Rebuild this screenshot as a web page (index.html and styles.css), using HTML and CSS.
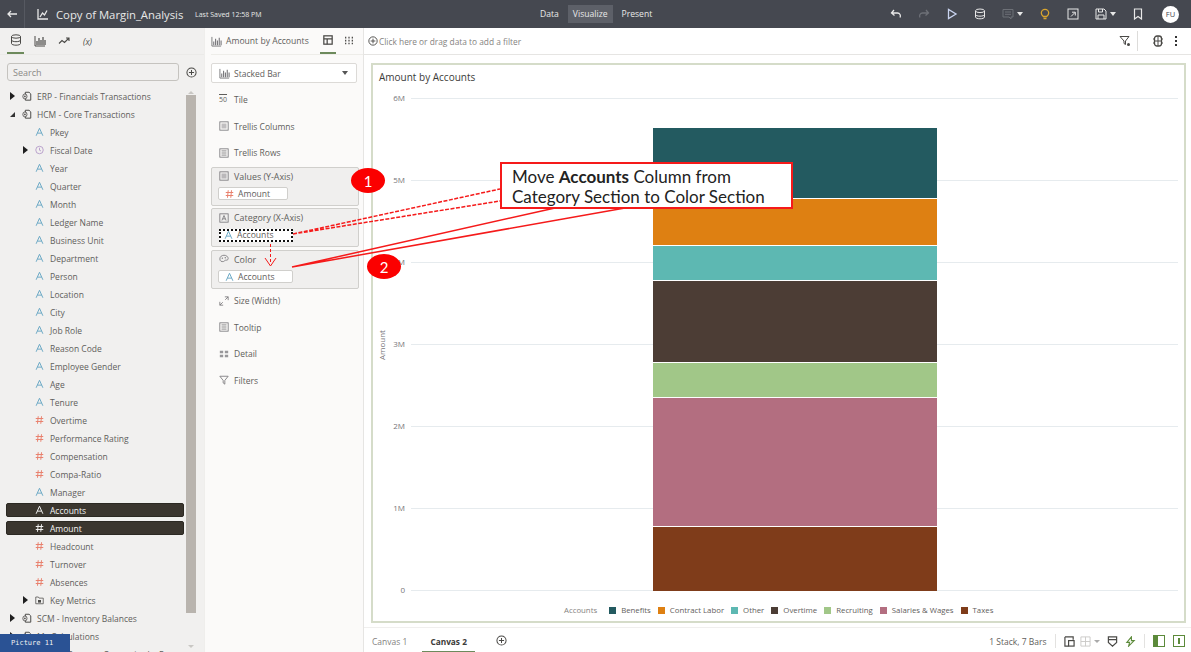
FILE: index.html
```html
<!DOCTYPE html>
<html lang="en">
<head>
    <meta charset="UTF-8">
    <title>Copy of Margin_Analysis</title>
    <link rel="stylesheet" href="styles.css">
</head>
<body>
    <svg class="defs" width="0" height="0">
        <symbol id="i-attr" viewBox="0 0 12 12"><path d="M1.500 11 6 1l4.500 10M3.200 7.500h5.600" fill="none" stroke="currentColor" stroke-width="1.300"/></symbol>
        <symbol id="i-num" viewBox="0 0 12 12"><path d="M4.300 1 3.300 11M8.700 1l-1 10M1 4h10M1 8h10" fill="none" stroke="currentColor" stroke-width="1.300"/></symbol>
        <symbol id="i-clock" viewBox="0 0 12 12"><circle cx="6" cy="6" r="5" fill="none" stroke="currentColor"/><path d="M6 3v3.300l2 1" fill="none" stroke="currentColor"/></symbol>
        <symbol id="i-source" viewBox="0 0 12 12"><path d="M4 1.500h4.500l2 2V11H4z" fill="none" stroke="currentColor" stroke-width="1.200"/><ellipse cx="3.500" cy="6.500" rx="2.500" ry="3" fill="#f1f0ef" stroke="currentColor"/><circle cx="3.500" cy="6.500" r="1" fill="currentColor"/></symbol>
        <symbol id="i-folder" viewBox="0 0 12 12"><path d="M1 2h3.500l1 1.500H11V11H1z" fill="none" stroke="currentColor"/><rect x="4" y="6" width="4" height="3.500" fill="currentColor"/></symbol>
        <symbol id="i-bars" viewBox="0 0 12 12"><path d="M1 1v10h10" fill="none" stroke="currentColor"/><path d="M3 10V6M5 10V3M7 10V5M9 10V2M11 10V5" stroke="currentColor" stroke-width="1.200"/></symbol>
        <symbol id="i-plus" viewBox="0 0 12 12"><circle cx="6" cy="6" r="5" fill="none" stroke="currentColor" stroke-width="1.100"/><path d="M6 3.200v5.600M3.200 6h5.600" stroke="currentColor" stroke-width="1.100"/></symbol>
        <symbol id="i-box" viewBox="0 0 12 12"><rect x="1" y="1" width="10" height="10" fill="none" stroke="currentColor"/><rect x="3" y="3" width="6" height="6" fill="currentColor" opacity=".45"/></symbol>
        <symbol id="i-lines" viewBox="0 0 12 12"><rect x="1" y="1" width="10" height="10" fill="none" stroke="currentColor"/><path d="M3 3.500h6M3 6h6M3 8.500h6" stroke="currentColor"/></symbol>
    </svg>

    <header class="topbar">
        <div class="back-cell"><svg class="ico" width="12" height="12" viewBox="0 0 12 12"><path d="M11 6H2M5 3 2 6l3 3" fill="none" stroke="currentColor" stroke-width="1.300"/></svg></div>
        <svg class="app-icon" width="12" height="12" viewBox="0 0 12 12"><path d="M1 1v10h10" fill="none" stroke="currentColor" stroke-width="1.300"/><path d="M3 9l2.500-4L7.500 7 10 2.500" fill="none" stroke="currentColor" stroke-width="1.300"/></svg>
        <span class="doc-title">Copy of Margin_Analysis</span>
        <span class="saved">Last Saved 12:58 PM</span>
        <nav class="modes">
            <span class="mode">Data</span>
            <span class="mode mode-on">Visualize</span>
            <span class="mode">Present</span>
        </nav>
        <div class="top-tools">
            <svg class="ico" width="12" height="12" viewBox="0 0 12 12"><path d="M4 2 1.500 5 4.500 7.500M2 5h5.500a3 3 0 0 1 2.500 4.500" fill="none" stroke="currentColor" stroke-width="1.300"/></svg>
            <svg class="ico dim" width="12" height="12" viewBox="0 0 12 12"><path d="M8 2l2.500 3-3 2.500M10 5H4.500A3 3 0 0 0 2 9.500" fill="none" stroke="currentColor" stroke-width="1.300"/></svg>
            <svg class="ico" width="12" height="12" viewBox="0 0 12 12"><path d="M2.500 1.500v9L10 6z" fill="none" stroke="#c9d4f0" stroke-width="1.300"/></svg>
            <svg class="ico" width="12" height="12" viewBox="0 0 12 12"><ellipse cx="6" cy="2.800" rx="4.500" ry="1.800" fill="none" stroke="currentColor"/><path d="M1.500 3v6c0 1 2 1.800 4.500 1.800S10.500 10 10.500 9V3M1.500 6.500c0 1 2 1.700 4.500 1.700s4.500-.7 4.500-1.700" fill="none" stroke="currentColor"/></svg>
            <span class="tool-drop dim"><svg class="ico" width="12" height="12" viewBox="0 0 12 12"><path d="M1 1.500h10v7.500H9v2L7 9H1zM3 4h6M3 6.300h6" fill="none" stroke="currentColor"/></svg><i class="caret"></i></span>
            <svg class="ico bulb" width="12" height="12" viewBox="0 0 12 12"><path d="M4.300 8.500C3 7.500 2.300 6.500 2.300 5a3.700 3.700 0 0 1 7.400 0c0 1.500-.7 2.500-2 3.500zM4.500 10.500h3" fill="none" stroke="currentColor" stroke-width="1.300"/></svg>
            <svg class="ico" width="12" height="12" viewBox="0 0 12 12"><rect x="1" y="1" width="10" height="10" fill="none" stroke="currentColor"/><path d="M4 8.500 8 4.500M5 4.200h3.300v3.300" fill="none" stroke="currentColor"/></svg>
            <span class="tool-drop"><svg class="ico" width="12" height="12" viewBox="0 0 12 12"><path d="M1 1h8l2 2v8H1zM3.500 1v3h4V1M3 11V7h6v4" fill="none" stroke="currentColor"/></svg><i class="caret"></i></span>
            <svg class="ico" width="12" height="12" viewBox="0 0 12 12"><path d="M2.500 1h7v10L6 8.500 2.500 11z" fill="none" stroke="currentColor" stroke-width="1.200"/></svg>
            <span class="avatar">FU</span>
        </div>
    </header>

    <div class="workspace">
        <aside class="data-panel">
            <div class="panel-tabs">
                <span class="panel-tab tab-on"><svg width="12" height="12" viewBox="0 0 12 12"><ellipse cx="6" cy="2.500" rx="4.500" ry="1.700" fill="none" stroke="currentColor"/><path d="M1.500 2.500v7c0 1 2 1.700 4.500 1.700s4.500-.7 4.500-1.700v-7M1.500 6c0 1 2 1.700 4.500 1.700S10.500 7 10.500 6" fill="none" stroke="currentColor"/></svg></span>
                <span class="panel-tab"><svg width="12" height="12"><use href="#i-bars"/></svg></span>
                <span class="panel-tab"><svg width="12" height="12" viewBox="0 0 12 12"><path d="M1 8.500 4 5.500 6.500 7.500 11 3M8 3h3v3" fill="none" stroke="currentColor" stroke-width="1.100"/></svg></span>
                <span class="panel-tab fx">(x)</span>
            </div>
            <div class="search-row">
                <div class="search">Search</div>
                <svg class="add-data" width="11" height="11"><use href="#i-plus"/></svg>
            </div>
            <div class="tree-wrap">
                <ul class="tree">
                    <li class="row lvl1"><i class="tri"></i><svg class="rico src"><use href="#i-source"/></svg>ERP - Financials Transactions</li>
                    <li class="row lvl1"><i class="tri tri-open"></i><svg class="rico src"><use href="#i-source"/></svg>HCM - Core Transactions</li>
                    <li class="row lvl2"><svg class="rico attr"><use href="#i-attr"/></svg>Pkey</li>
                    <li class="row lvl2 has-tri"><i class="tri"></i><svg class="rico date"><use href="#i-clock"/></svg>Fiscal Date</li>
                    <li class="row lvl2"><svg class="rico attr"><use href="#i-attr"/></svg>Year</li>
                    <li class="row lvl2"><svg class="rico attr"><use href="#i-attr"/></svg>Quarter</li>
                    <li class="row lvl2"><svg class="rico attr"><use href="#i-attr"/></svg>Month</li>
                    <li class="row lvl2"><svg class="rico attr"><use href="#i-attr"/></svg>Ledger Name</li>
                    <li class="row lvl2"><svg class="rico attr"><use href="#i-attr"/></svg>Business Unit</li>
                    <li class="row lvl2"><svg class="rico attr"><use href="#i-attr"/></svg>Department</li>
                    <li class="row lvl2"><svg class="rico attr"><use href="#i-attr"/></svg>Person</li>
                    <li class="row lvl2"><svg class="rico attr"><use href="#i-attr"/></svg>Location</li>
                    <li class="row lvl2"><svg class="rico attr"><use href="#i-attr"/></svg>City</li>
                    <li class="row lvl2"><svg class="rico attr"><use href="#i-attr"/></svg>Job Role</li>
                    <li class="row lvl2"><svg class="rico attr"><use href="#i-attr"/></svg>Reason Code</li>
                    <li class="row lvl2"><svg class="rico attr"><use href="#i-attr"/></svg>Employee Gender</li>
                    <li class="row lvl2"><svg class="rico attr"><use href="#i-attr"/></svg>Age</li>
                    <li class="row lvl2"><svg class="rico attr"><use href="#i-attr"/></svg>Tenure</li>
                    <li class="row lvl2"><svg class="rico num"><use href="#i-num"/></svg>Overtime</li>
                    <li class="row lvl2"><svg class="rico num"><use href="#i-num"/></svg>Performance Rating</li>
                    <li class="row lvl2"><svg class="rico num"><use href="#i-num"/></svg>Compensation</li>
                    <li class="row lvl2"><svg class="rico num"><use href="#i-num"/></svg>Compa-Ratio</li>
                    <li class="row lvl2"><svg class="rico attr"><use href="#i-attr"/></svg>Manager</li>
                    <li class="row lvl2 picked"><svg class="rico"><use href="#i-attr"/></svg>Accounts</li>
                    <li class="row lvl2 picked"><svg class="rico"><use href="#i-num"/></svg>Amount</li>
                    <li class="row lvl2"><svg class="rico num"><use href="#i-num"/></svg>Headcount</li>
                    <li class="row lvl2"><svg class="rico num"><use href="#i-num"/></svg>Turnover</li>
                    <li class="row lvl2"><svg class="rico num"><use href="#i-num"/></svg>Absences</li>
                    <li class="row lvl2 has-tri"><i class="tri"></i><svg class="rico src"><use href="#i-folder"/></svg>Key Metrics</li>
                    <li class="row lvl1"><i class="tri"></i><svg class="rico src"><use href="#i-source"/></svg>SCM - Inventory Balances</li>
                    <li class="row lvl1"><i class="tri"></i><svg class="rico src"><use href="#i-source"/></svg>My Calculations</li>
                    <li class="row lvl1"><i class="tri"></i><svg class="rico src"><use href="#i-source"/></svg>FY2020 Expense Categories by Expense</li>
                </ul>
                <div class="scrollbar">
                    <i class="arrow arrow-up"></i>
                    <i class="thumb"></i>
                    <i class="arrow arrow-down"></i>
                </div>
            </div>
        </aside>

        <section class="grammar-panel">
            <div class="grammar-head">
                <svg class="head-ico" width="11" height="11"><use href="#i-bars"/></svg>
                <span class="viz-name">Amount by Accounts</span>
                <span class="grammar-tab tab-on"><svg width="10" height="10" viewBox="0 0 12 12"><rect x="1" y="1" width="10" height="10" fill="none" stroke="currentColor" stroke-width="1.500"/><path d="M1 4.500h10M5 4.500V11" stroke="currentColor" stroke-width="1.500"/></svg></span>
                <span class="grammar-tab"><svg width="10" height="10" viewBox="0 0 12 12"><path d="M2 1v10M6 1v10M10 1v10" stroke="currentColor" stroke-dasharray="2 1.500" stroke-width="1.500"/></svg></span>
            </div>
            <div class="viz-select">
                <svg class="head-ico" width="11" height="11"><use href="#i-bars"/></svg>
                <span>Stacked Bar</span>
                <i class="select-caret"></i>
            </div>
            <div class="slot slot-first"><span class="so">50</span>Tile</div>
            <div class="slot"><svg class="slot-ico"><use href="#i-box"/></svg>Trellis Columns</div>
            <div class="slot"><svg class="slot-ico"><use href="#i-lines"/></svg>Trellis Rows</div>
            <div class="well first-well">
                <div class="well-label"><svg class="slot-ico"><use href="#i-box"/></svg>Values (Y-Axis)</div>
                <div class="pill pill-short"><svg class="rico num"><use href="#i-num"/></svg>Amount</div>
            </div>
            <div class="well">
                <div class="well-label"><svg class="slot-ico" viewBox="0 0 12 12"><rect x="1" y="1" width="10" height="10" fill="none" stroke="currentColor"/><path d="M3.500 9 6 3l2.500 6M4.500 7h3" fill="none" stroke="currentColor"/></svg>Category (X-Axis)</div>
                <div class="pill pill-dotted"><svg class="rico attr"><use href="#i-attr"/></svg>Accounts</div>
            </div>
            <div class="well">
                <div class="well-label"><svg class="slot-ico" viewBox="0 0 12 12"><path d="M1 6c0-3 2.500-4.500 5-4.500s5 1.500 5 4c0 2-2 2-3.500 2-1 0-1 1.500-2 1.500C3 9.500 1 8.500 1 6z" fill="none" stroke="currentColor"/><circle cx="4" cy="5" r=".8" fill="currentColor"/><circle cx="7.500" cy="4.500" r=".8" fill="currentColor"/></svg>Color</div>
                <div class="pill"><svg class="rico attr"><use href="#i-attr"/></svg>Accounts</div>
            </div>
            <div class="slot slot-after"><svg class="slot-ico" viewBox="0 0 12 12"><path d="M1 7v4h4M7 1h4v4M1 11l3.500-3.500M11 1 7.500 4.500" fill="none" stroke="currentColor"/></svg>Size (Width)</div>
            <div class="slot"><svg class="slot-ico"><use href="#i-lines"/></svg>Tooltip</div>
            <div class="slot"><svg class="slot-ico" viewBox="0 0 12 12"><path d="M1 2h4v3H1zM7 2h4v3H7zM1 7h4v3H1zM7 7h4v3H7z" fill="currentColor" opacity=".75"/></svg>Detail</div>
            <div class="slot"><svg class="slot-ico" viewBox="0 0 12 12"><path d="M1 1.500h10L7 6.500V11L5 9.500v-3z" fill="none" stroke="currentColor"/></svg>Filters</div>
        </section>

        <main class="canvas-area">
            <div class="filter-bar">
                <svg class="filter-plus" width="10" height="10"><use href="#i-plus"/></svg>
                <span class="filter-hint">Click here or drag data to add a filter</span>
                <svg class="filter-ico filter-funnel" width="12" height="12" viewBox="0 0 12 12"><path d="M1 1.500h9L6.500 6v3.500L5 8.500V6z" fill="none" stroke="currentColor"/><circle cx="9.500" cy="9.500" r="1.500" fill="currentColor"/></svg>
                <span class="filter-sep"></span>
                <svg class="filter-ico" width="12" height="12" viewBox="0 0 12 12"><rect x="2.500" y="1" width="7" height="10" rx="2.500" fill="none" stroke="currentColor" stroke-width="1.300"/><path d="M6 1v10M2.500 6h7M1 4h1.500M1 8h1.500M9.500 4H11M9.500 8H11" stroke="currentColor"/></svg>
                <span class="kebab"><i></i><i></i><i></i></span>
            </div>
            <div class="viz-wrap">
                <div class="viz-frame">
                    <div class="viz-title">Amount by Accounts</div>
                    <svg class="plot" width="811" height="512" viewBox="0 0 811 512">
                        <g class="grid">
                            <path d="M39 8.500H806M39 90.500H806M39 172.500H806M39 254.500H806M39 336.500H806M39 418.500H806M39 500.500H806"/>
                        </g>
                        <g class="ticks" text-anchor="end">
                            <text x="33" y="11">6M</text>
                            <text x="33" y="93">5M</text>
                            <text x="33" y="175">4M</text>
                            <text x="33" y="257">3M</text>
                            <text x="33" y="339">2M</text>
                            <text x="33" y="421">1M</text>
                            <text x="33" y="503">0</text>
                        </g>
                        <text class="ticks" transform="translate(13 255) rotate(-90)" text-anchor="middle">Amount</text>
                        <rect x="281" y="38" width="284" height="70" fill="#235a60"/>
                        <rect x="281" y="109" width="284" height="46" fill="#de8012"/>
                        <rect x="281" y="156" width="284" height="34" fill="#5db8b2"/>
                        <rect x="281" y="191" width="284" height="81" fill="#4c3d35"/>
                        <rect x="281" y="273" width="284" height="34" fill="#a1c788"/>
                        <rect x="281" y="308" width="284" height="128" fill="#b36e80"/>
                        <rect x="281" y="437" width="284" height="64" fill="#7f3c1a"/>
                    </svg>
                    <div class="legend">
                        <span class="legend-name">Accounts</span>
                        <span class="key"><i class="sw sw-1"></i>Benefits</span>
                        <span class="key"><i class="sw sw-2"></i>Contract Labor</span>
                        <span class="key"><i class="sw sw-3"></i>Other</span>
                        <span class="key"><i class="sw sw-4"></i>Overtime</span>
                        <span class="key"><i class="sw sw-5"></i>Recruiting</span>
                        <span class="key"><i class="sw sw-6"></i>Salaries &amp; Wages</span>
                        <span class="key"><i class="sw sw-7"></i>Taxes</span>
                    </div>
                </div>
            </div>
            <footer class="canvas-tabs">
                <span class="canvas-tab">Canvas 1</span>
                <span class="canvas-tab canvas-on">Canvas 2</span>
                <svg class="canvas-add" width="11" height="11"><use href="#i-plus"/></svg>
                <span class="stack-info">1 Stack, 7 Bars</span>
                <span class="foot-sep"></span>
                <svg class="foot-ico foot-first" width="11" height="11" viewBox="0 0 12 12"><path d="M1 1h9v3M1 1v10h4" fill="none" stroke="currentColor" stroke-width="1.300"/><rect x="5" y="5" width="6" height="6" fill="none" stroke="currentColor" stroke-width="1.300"/></svg>
                <svg class="foot-ico faint" width="11" height="11" viewBox="0 0 12 12"><path d="M1 1h10v10H1zM6 1v10M1 6h10" fill="none" stroke="currentColor"/></svg>
                <i class="foot-caret"></i>
                <svg class="foot-ico" width="11" height="11" viewBox="0 0 12 12"><path d="M1.500 1h9v6L6 11 1.500 7zM1.500 4h9" fill="none" stroke="currentColor" stroke-width="1.300"/></svg>
                <svg class="foot-ico green foot-zap" width="11" height="11" viewBox="0 0 12 12"><path d="M7 1 2 7h3l-1 4 6-6H7z" fill="none" stroke="currentColor" stroke-width="1.200"/></svg>
                <span class="foot-sep"></span>
                <svg class="foot-ico green foot-left" width="12" height="12" viewBox="0 0 12 12"><rect x=".5" y=".5" width="11" height="11" fill="none" stroke="currentColor"/><rect x="1" y="1" width="4" height="10" fill="currentColor"/></svg>
                <svg class="foot-ico green" width="12" height="12" viewBox="0 0 12 12"><rect x=".5" y=".5" width="11" height="11" fill="none" stroke="currentColor"/><rect x="5" y="3" width="2" height="6" fill="currentColor"/></svg>
            </footer>
        </main>
    </div>

    <!-- annotation drawn on top of the screenshot -->
    <svg class="notes" width="1191" height="652" viewBox="0 0 1191 652">
        <g fill="none" stroke="#f51a1a">
            <path d="M293 234 500 189M293 234 500 201" stroke-width="1.500" stroke-dasharray="4 1.500"/>
            <path d="M292 267 555 208M292 267 625 208" stroke-width="1.500"/>
            <path d="M270.500 244V262" stroke-dasharray="3 2"/>
            <path d="M265 258 270.500 266 276 258"/>
        </g>
    </svg>
    <div class="callout">Move <b>Accounts</b> Column from<br>Category Section to Color Section</div>
    <span class="marker marker-1">1</span>
    <span class="marker marker-2">2</span>
    <div class="pic-tag">Picture 11</div>
</body>
</html>
```

FILE: styles.css
```css
* {
    box-sizing: border-box;
}
html, body {
    margin: 0;
    height: 100%;
}
body {
    position: relative;
    display: flex;
    flex-direction: column;
    width: 1191px;
    height: 652px;
    overflow: hidden;
    font-family: "Open Sans", "Noto Sans", sans-serif;
    font-size: 9px;
    color: #5f5e5c;
    background: #fff;
}
i {
    display: block;
}
.defs {
    position: absolute;
}

/* top bar */
.topbar {
    flex: none;
    display: flex;
    align-items: center;
    height: 28px;
    background: #454850;
    color: #e8e8e8;
}
.back-cell {
    display: flex;
    align-items: center;
    justify-content: center;
    width: 25px;
    height: 100%;
    border-right: 1px solid #565961;
}
.app-icon {
    margin-left: 12px;
}
.doc-title {
    margin-left: 7px;
    font-size: 11.300px;
    width: 139px;
    white-space: nowrap;
}
.saved {
    margin-left: 0;
    font-size: 7px;
    width: 87px;
    white-space: nowrap;
}
.modes {
    display: flex;
    align-items: center;
    margin-left: 253px;
}
.mode {
    padding: 3px 5px;
    font-size: 8.600px;
    margin-right: 4px;
}
.mode-on {
    background: #5d6068;
}
.top-tools {
    display: flex;
    align-items: center;
    gap: 16px;
    margin-left: auto;
    padding-right: 12px;
}
.ico {
    display: block;
    color: #e8e8e8;
}
.dim, .dim .ico {
    color: #6d7077;
}
.bulb {
    color: #d9a52e;
}
.tool-drop {
    display: flex;
    align-items: center;
    gap: 3px;
}
.caret {
    width: 0;
    height: 0;
    border: 3px solid transparent;
    border-top: 4px solid #e8e8e8;
    border-bottom: 0;
}
.avatar {
    display: flex;
    align-items: center;
    justify-content: center;
    width: 17px;
    height: 17px;
    border-radius: 50%;
    background: #fff;
    color: #454850;
    font-size: 7.500px;
    margin-left: 2px;
}

.workspace {
    flex: 1;
    display: flex;
    min-height: 0;
}

/* data panel */
.data-panel {
    width: 204px;
    background: #f1f0ef;
    display: flex;
    flex-direction: column;
    min-height: 0;
}
.panel-tabs {
    display: flex;
    height: 27px;
    padding-left: 7px;
    gap: 7px;
    border-bottom: 1px solid #ebeae8;
}
.panel-tab {
    width: 17px;
    display: flex;
    align-items: center;
    justify-content: center;
    color: #4a4946;
}
.tab-on {
    border-bottom: 2px solid #6d8a5c;
}
.fx {
    font-style: italic;
    font-size: 8.500px;
}
.search-row {
    display: flex;
    align-items: center;
    padding: 8px 0 0 7px;
}
.search {
    width: 172px;
    height: 18px;
    padding: 2px 5px;
    border: 1px solid #c5c3bf;
    border-radius: 3px;
    color: #8b8a87;
}
.add-data {
    margin-left: 7px;
    color: #4a4946;
}
.tree-wrap {
    display: flex;
    flex: 1;
    min-height: 0;
    margin-top: 6px;
}
.tree {
    display: flex;
    flex-direction: column;
    list-style: none;
    margin: 0;
    padding: 0 0 0 6px;
    width: 186px;
    overflow: hidden;
}
.row {
    position: relative;
    flex: none;
    display: flex;
    align-items: center;
    height: 18px;
    white-space: nowrap;
    font-size: 8.500px;
    border-radius: 2px;
    margin-right: 2px;
}
.lvl1 {
    padding-left: 16px;
}
.lvl2 {
    padding-left: 29px;
}
.tri {
    position: absolute;
    left: 4px;
    width: 0;
    height: 0;
    border: 4px solid transparent;
    border-left: 5px solid #1f1f1f;
    border-right: 0;
}
.has-tri .tri {
    left: 17px;
}
.tri-open {
    left: 4px;
    border: 0;
    border-bottom: 5px solid #333;
    border-left: 5px solid transparent;
}
.rico {
    width: 9px;
    height: 10px;
    margin-right: 6px;
    flex: none;
}
.lvl1 .rico {
    width: 10px;
    margin-right: 5px;
}
.attr {
    color: #6aa8c4;
}
.num {
    color: #e8806c;
}
.date {
    color: #a98bc2;
}
.src {
    color: #4d4c4a;
}
.picked {
    background: #3b362f;
    color: #f4f4f4;
    height: 14px;
    margin-top: 2px;
    margin-bottom: 2px;
    border: 1px solid #2c2923;
}
.picked.lvl2 {
    padding-left: 28px;
}
.scrollbar {
    width: 10px;
}
.arrow {
    width: 0;
    height: 0;
    margin-left: 2px;
    border: 3px solid transparent;
}
.arrow-up {
    border-top: 0;
    border-bottom: 3px solid #c9c7c4;
    margin-top: 4px;
}
.thumb {
    width: 10px;
    height: 518px;
    margin-top: 1px;
    background: #b9b4ae;
}
.arrow-down {
    border-bottom: 0;
    border-top: 3px solid #c9c7c4;
    margin-top: 32px;
}

/* grammar panel */
.grammar-panel {
    width: 160px;
    background: #fbfaf9;
    border-left: 1px solid #efeeec;
    border-right: 1px solid #e6e5e3;
    padding: 0 5px 0 6px;
    flex: none;
}
.grammar-head {
    display: flex;
    align-items: center;
    height: 27px;
    margin: 0 -5px 0 0;
    border-bottom: 1px solid #eeede9;
}
.head-ico {
    color: #77767a;
    flex: none;
}
.viz-name {
    margin-left: 4px;
    font-size: 8.600px;
    width: 97px;
    white-space: nowrap;
}
.grammar-tab {
    display: flex;
    align-items: center;
    justify-content: center;
    width: 16px;
    height: 100%;
    margin-right: 6px;
    color: #4a4946;
}
.viz-select {
    display: flex;
    align-items: center;
    gap: 4px;
    width: 146px;
    height: 20px;
    margin-top: 8px;
    padding: 0 8px 0 7px;
    background: #fff;
    border: 1px solid #dcdad7;
    border-radius: 2px;
    font-size: 8.500px;
}
.select-caret {
    margin-left: auto;
    width: 0;
    height: 0;
    border: 3px solid transparent;
    border-top: 4px solid #555;
    border-bottom: 0;
}
.slot {
    display: flex;
    align-items: center;
    height: 26.600px;
    padding-left: 8px;
    font-size: 8.500px;
}
.slot-first {
    margin-top: 3.500px;
}
.slot-after {
    margin-top: -1.500px;
}
.slot-ico {
    width: 10px;
    height: 10px;
    margin-right: 5px;
    color: #77767a;
    flex: none;
}
.so {
    width: 10px;
    margin-right: 5px;
    font-size: 7px;
    text-decoration: overline;
}
.well {
    width: 148px;
    height: 39px;
    margin-top: 2.500px;
    padding: 2px 0 0 6px;
    background: #f0efee;
    border: 1px solid #d0cfcc;
    border-radius: 2px;
}
.first-well {
    margin-top: .500px;
}
.well-label {
    display: flex;
    align-items: center;
    height: 13px;
    padding-left: 1px;
    font-size: 8.900px;
}
.pill {
    display: flex;
    align-items: center;
    width: 75px;
    height: 13px;
    margin-top: 4.500px;
    padding-left: 6px;
    background: #fff;
    border: 1px solid #d0cfcc;
    border-radius: 2px;
    font-size: 8.600px;
}
.pill .rico {
    margin-right: 4px;
}
.pill-short {
    width: 70px;
}
.pill-dotted {
    width: 74px;
    border: 2px dotted #111;
    border-radius: 0;
    margin-left: 1px;
    padding-left: 3px;
}

/* canvas */
.canvas-area {
    flex: 1;
    display: flex;
    flex-direction: column;
    min-width: 0;
}
.filter-bar {
    display: flex;
    align-items: center;
    height: 27px;
    padding-left: 4px;
    border-bottom: 1px solid #e6e5e3;
    flex: none;
}
.filter-plus {
    color: #4a4946;
}
.filter-hint {
    margin-left: 1px;
    color: #85837f;
    font-size: 8.350px;
}
.filter-ico {
    color: #4a4946;
}
.filter-funnel {
    margin-left: auto;
}
.filter-sep {
    width: 1px;
    height: 20px;
    margin: 0 14px 0 6px;
    background: #dddcda;
}
.kebab {
    display: flex;
    flex-direction: column;
    gap: 2px;
    margin: 0 14px 0 11px;
}
.kebab i {
    width: 2px;
    height: 2px;
    background: #333;
}
.viz-wrap {
    flex: 1;
    padding: 8px 5px 5px 7px;
    min-height: 0;
}
.viz-frame {
    height: 560px;
    border: 2px solid #d5dcc9;
    background: #fff;
    padding: 5px 0 0 6px;
}
.viz-title {
    height: 20px;
    font-size: 10px;
    color: #3c3b39;
}
.plot {
    display: block;
    margin-left: -7px;
}
.grid path {
    fill: none;
    stroke: #e6ebee;
}
.ticks {
    font-family: "Open Sans", sans-serif;
    font-size: 8px;
    fill: #77767a;
}
.legend {
    display: flex;
    align-items: center;
    gap: 7px;
    height: 16px;
    padding-left: 185px;
    font-size: 7.800px;
}
.legend-name {
    margin-right: 5px;
    color: #85837f;
}
.key {
    display: flex;
    align-items: center;
    gap: 5px;
}
.sw {
    width: 7px;
    height: 7px;
}
.sw-1 { background: #235a60; }
.sw-2 { background: #de8012; }
.sw-3 { background: #5db8b2; }
.sw-4 { background: #4c3d35; }
.sw-5 { background: #a1c788; }
.sw-6 { background: #b36e80; }
.sw-7 { background: #7f3c1a; }

.canvas-tabs {
    flex: none;
    display: flex;
    align-items: center;
    height: 25px;
    padding: 0 0 0 8px;
    border-top: 1px solid #f0efee;
}
.canvas-tab {
    display: flex;
    align-items: center;
    height: 100%;
    padding-top: 3px;
    font-size: 8.500px;
    color: #85837f;
    margin-right: 15px;
}
.canvas-on {
    padding: 3px 8px 0;
    font-size: 8.300px;
    font-weight: 700;
    color: #3c3b39;
    border-bottom: 1px solid #6d8a5c;
    margin-right: 21px;
}
.canvas-add {
    color: #4a4946;
    margin-top: 1px;
}
.stack-info {
    margin-left: auto;
    padding-top: 3px;
    font-size: 8.500px;
}
.foot-sep {
    width: 1px;
    height: 14px;
    margin: 2px 8px 0;
    background: #e3e2e0;
}
.foot-ico {
    color: #4a4946;
    margin: 2px 7px 0 0;
}
.foot-first {
    margin-right: 5px;
}
.faint {
    color: #c9c8c6;
    margin-right: 3px;
}
.foot-caret {
    width: 0;
    height: 0;
    margin: 2px 7px 0 0;
    border: 3px solid transparent;
    border-top: 3px solid #aaa;
    border-bottom: 0;
}
.green {
    color: #5c8a3a;
    margin-right: 6px;
}
.foot-zap {
    margin-right: .500px;
}
.foot-left {
    margin-right: 8px;
}

/* things lying over the page */
.notes {
    position: absolute;
    left: 0;
    top: 0;
    pointer-events: none;
}
.callout {
    position: absolute;
    left: 500px;
    top: 162px;
    width: 293px;
    height: 47px;
    padding: 3px 0 0 10px;
    background: #fff;
    border: 2px solid #f51a1a;
    font-family: Lato, "Open Sans", sans-serif;
    font-size: 17px;
    line-height: 20px;
    color: #222;
}
.marker {
    position: absolute;
    display: flex;
    align-items: center;
    justify-content: center;
    width: 34px;
    height: 25px;
    border-radius: 50%;
    background: #fb0000;
    color: #fff;
    font-family: Lato, "Open Sans", sans-serif;
    font-size: 15px;
}
.marker-1 {
    left: 351px;
    top: 168px;
}
.marker-2 {
    left: 367px;
    top: 254px;
}
.pic-tag {
    position: absolute;
    left: 0;
    top: 634px;
    width: 70px;
    height: 18px;
    padding-left: 11px;
    background: #2a5294;
    color: #f2f2f2;
    font-family: "DejaVu Sans Mono", monospace;
    font-size: 7px;
    line-height: 18px;
}
```
